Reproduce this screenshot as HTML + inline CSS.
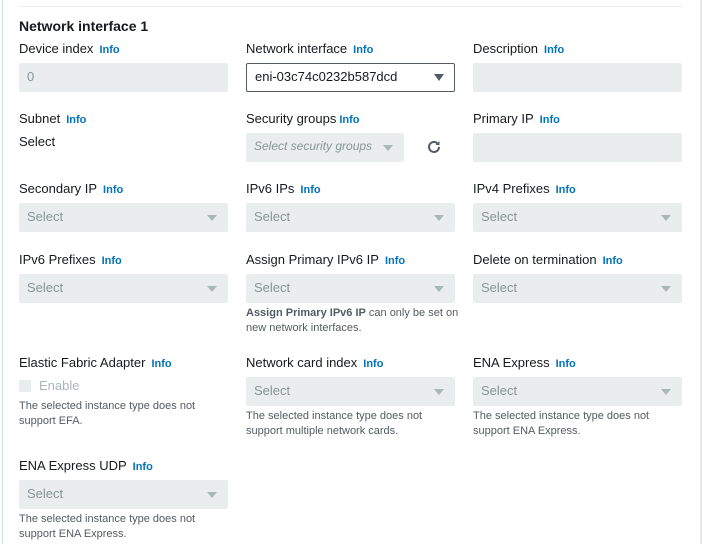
<!DOCTYPE html>
<html><head><style>
body{margin:0;width:710px;height:544px;background:#fff;font-family:"Liberation Sans",sans-serif;position:relative;overflow:hidden;color:#16191f}
.vl{position:absolute;left:2px;top:0;width:1px;height:544px;background:#d5dbdb}
.vr{position:absolute;left:700px;top:0;width:2px;height:544px;background:#e6e8e8}
.hl{position:absolute;left:19px;top:6px;width:663px;height:1px;background:#eaeded}
h1{position:absolute;left:19px;top:18px;margin:0;font-size:14px;font-weight:bold}
.f{position:absolute;width:209px}
.l{font-size:13px;height:18px;white-space:nowrap}
.l b{color:#0073bb;font-size:11px;margin-left:6px}
.i{margin-top:4px;height:29px;background:#eaeded;border-radius:2px;font-size:13px;color:#879596;line-height:27px;padding-left:8px;box-sizing:border-box;position:relative}
.i.s:after{content:"";position:absolute;right:11px;top:12px;border-left:5px solid transparent;border-right:5px solid transparent;border-top:6px solid #aab7b8}
.h{font-size:11px;color:#545b64;line-height:15px;margin-top:3px}
</style></head><body>
<div class="vl"></div><div class="vr"></div><div class="hl"></div>
<h1>Network interface 1</h1>

<div class="f" style="left:19px;top:41px"><div class="l">Device index<b>Info</b></div><div class="i">0</div></div>
<div class="f" style="left:246px;top:41px"><div class="l">Network interface<b>Info</b></div><div class="i" style="background:#fff;border:1px solid #545b64;color:#16191f;line-height:25px">eni-03c74c0232b587dcd<span style="position:absolute;right:10px;top:10px;border-left:5px solid transparent;border-right:5px solid transparent;border-top:7px solid #545b64"></span></div></div>
<div class="f" style="left:473px;top:41px"><div class="l">Description<b>Info</b></div><div class="i"></div></div>

<div class="f" style="left:19px;top:111px"><div class="l">Subnet<b>Info</b></div><div style="font-size:13px;margin-top:5px">Select</div></div>
<div class="f" style="left:246px;top:111px"><div class="l">Security groups<b style="margin-left:3px">Info</b></div><div class="i" style="width:158px;font-style:italic;font-size:12px;white-space:nowrap">Select security groups<span style="position:absolute;right:11px;top:12px;border-left:5px solid transparent;border-right:5px solid transparent;border-top:6px solid #aab7b8"></span></div>
<svg style="position:absolute;left:180px;top:28px" width="16" height="16" viewBox="0 0 16 16"><path d="M13 8a5 5 0 1 1-1.5-3.6" fill="none" stroke="#545b64" stroke-width="2"/><path d="M13.5 2v4h-4z" fill="#545b64"/></svg></div>
<div class="f" style="left:473px;top:111px"><div class="l">Primary IP<b>Info</b></div><div class="i"></div></div>

<div class="f" style="left:19px;top:181px"><div class="l">Secondary IP<b>Info</b></div><div class="i s">Select</div></div>
<div class="f" style="left:246px;top:181px"><div class="l">IPv6 IPs<b>Info</b></div><div class="i s">Select</div></div>
<div class="f" style="left:473px;top:181px"><div class="l">IPv4 Prefixes<b>Info</b></div><div class="i s">Select</div></div>

<div class="f" style="left:19px;top:252px"><div class="l">IPv6 Prefixes<b>Info</b></div><div class="i s">Select</div></div>
<div class="f" style="left:246px;top:252px;width:215px"><div class="l">Assign Primary IPv6 IP<b>Info</b></div><div class="i s" style="width:209px">Select</div><div class="h" style="margin-top:3px"><b>Assign Primary IPv6 IP</b> can only be set on new network interfaces.</div></div>
<div class="f" style="left:473px;top:252px"><div class="l">Delete on termination<b>Info</b></div><div class="i s">Select</div></div>

<div class="f" style="left:19px;top:355px"><div class="l">Elastic Fabric Adapter<b>Info</b></div><div style="margin-top:5px;font-size:13px;color:#aab7b8;height:18px"><span style="display:inline-block;width:12px;height:12px;background:#eaeded;vertical-align:-2px;margin-right:8px"></span>Enable</div><div class="h" style="margin-top:3px">The selected instance type does not support EFA.</div></div>
<div class="f" style="left:246px;top:355px"><div class="l">Network card index<b>Info</b></div><div class="i s">Select</div><div class="h">The selected instance type does not support multiple network cards.</div></div>
<div class="f" style="left:473px;top:355px"><div class="l">ENA Express<b>Info</b></div><div class="i s">Select</div><div class="h">The selected instance type does not support ENA Express.</div></div>

<div class="f" style="left:19px;top:458px"><div class="l">ENA Express UDP<b>Info</b></div><div class="i s">Select</div><div class="h">The selected instance type does not support ENA Express.</div></div>
</body></html>
